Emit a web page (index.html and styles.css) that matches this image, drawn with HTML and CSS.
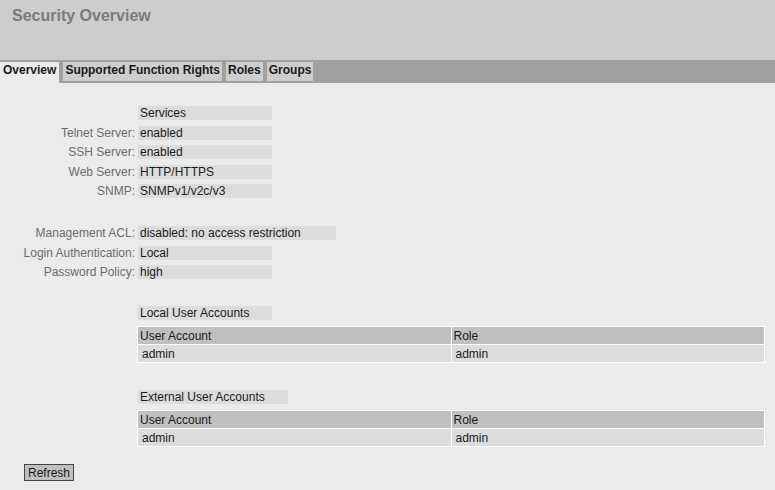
FILE: index.html
```html
<!DOCTYPE html>
<html lang="en">
<head>
<meta charset="utf-8">
<title>Security Overview</title>
<link rel="stylesheet" href="styles.css">
</head>
<body>
<header class="top">
  <h1 class="title">Security Overview</h1>
</header>
<nav class="tabs">
  <span class="tab active">Overview</span>
  <span class="tab">Supported Function Rights</span>
  <span class="tab">Roles</span>
  <span class="tab">Groups</span>
</nav>
<main class="content">
  <div class="fields">
    <span class="label"></span><span class="value">Services</span>
    <span class="label">Telnet Server:</span><span class="value">enabled</span>
    <span class="label">SSH Server:</span><span class="value">enabled</span>
    <span class="label">Web Server:</span><span class="value">HTTP/HTTPS</span>
    <span class="label">SNMP:</span><span class="value">SNMPv1/v2c/v3</span>
  </div>
  <div class="fields group2">
    <span class="label">Management ACL:</span><span class="value wide">disabled: no access restriction</span>
    <span class="label">Login Authentication:</span><span class="value">Local</span>
    <span class="label">Password Policy:</span><span class="value">high</span>
  </div>
  <div class="fields group3">
    <span class="label"></span><span class="value">Local User Accounts</span>
  </div>
  <table class="accounts">
    <tr><th>User Account</th><th>Role</th></tr>
    <tr><td>admin</td><td>admin</td></tr>
  </table>
  <div class="fields group3">
    <span class="label"></span><span class="value ext">External User Accounts</span>
  </div>
  <table class="accounts">
    <tr><th>User Account</th><th>Role</th></tr>
    <tr><td>admin</td><td>admin</td></tr>
  </table>
  <div class="actions">
    <button class="btn" type="button">Refresh</button>
  </div>
</main>
</body>
</html>
```
FILE: styles.css
```css
html, body {
  margin: 0;
  padding: 0;
}
body {
  background: #ebebeb;
  font-family: "Liberation Sans", Arial, sans-serif;
  font-size: 12px;
  color: #1a1a1a;
  height: 490px;
  overflow: hidden;
}
.top {
  background: #cdcdcd;
  height: 60px;
  box-sizing: border-box;
  padding: 7px 0 0 12px;
}
.title {
  margin: 0;
  font-size: 16px;
  font-weight: bold;
  color: #7b7b7b;
  line-height: 18px;
}
.tabs {
  background: #a0a0a0;
  height: 23px;
  box-sizing: border-box;
  padding-top: 2px;
  display: flex;
  gap: 4px;
}
.tab {
  background: #cdcdcd;
  font-weight: bold;
  color: #1a1a1a;
  height: 19px;
  line-height: 14px;
  padding: 1px 2px 0 2px;
  box-sizing: border-box;
  white-space: nowrap;
}
.tab.active {
  background: #ebebeb;
  height: 21px;
  padding-left: 3px;
  padding-right: 3px;
}
.content {
  padding-top: 23px;
}
.fields {
  display: grid;
  grid-template-columns: 138px auto;
  grid-auto-rows: 14px;
  row-gap: 5.5px;
  justify-content: start;
}
.label {
  text-align: right;
  padding-right: 3px;
  color: #6b6b6b;
  line-height: 14px;
  white-space: nowrap;
}
.value {
  background: #dcdcdc;
  width: 134px;
  box-sizing: border-box;
  padding-left: 2px;
  line-height: 14px;
  white-space: nowrap;
}
.value.wide {
  width: 198px;
}
.value.ext {
  width: 150px;
}
.group2 {
  margin-top: 28px;
}
.group3 {
  margin-top: 27px;
}
.accounts {
  margin: 6px 0 0 137px;
  width: 628px;
  background: #ffffff;
  border-collapse: separate;
  border-spacing: 1px;
  table-layout: fixed;
}
.accounts th,
.accounts td {
  height: 17px;
  padding: 0 0 0 2px;
  text-align: left;
  font-weight: normal;
  line-height: 14px;
  box-sizing: border-box;
}
.accounts th {
  background: #c0c0c0;
}
.accounts td {
  background: #dcdcdc;
  padding-left: 4px;
}
.actions {
  padding: 17px 0 0 24px;
}
.btn {
  font-family: "Liberation Sans", Arial, sans-serif;
  font-size: 12px;
  color: #1a1a1a;
  background: #c0c0c0;
  border: 1px solid #444;
  width: 50px;
  height: 17px;
  padding: 0;
  line-height: 14px;
  border-radius: 0;
}
```
